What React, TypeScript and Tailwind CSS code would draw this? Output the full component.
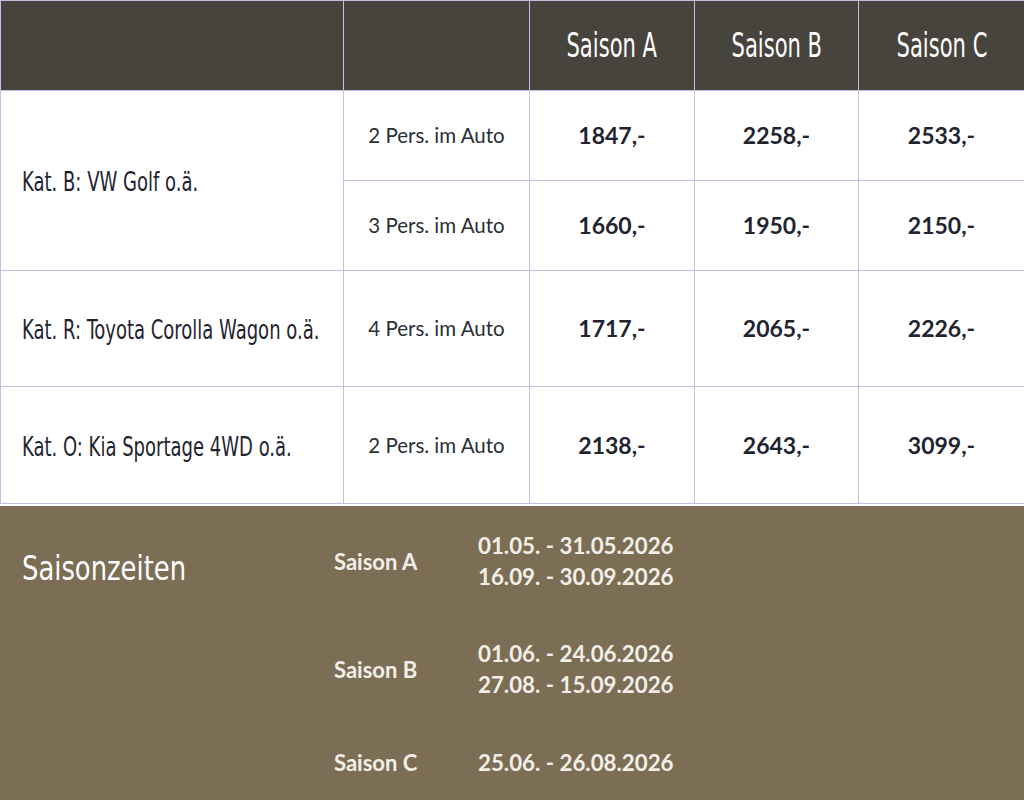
const cond = "font-['DejaVu_Sans_Condensed','DejaVu_Sans',sans-serif]";
const lato = "font-['Lato','Open_Sans',sans-serif]";

const rows = [
  { car: "Kat. B: VW Golf o.ä.", pers: "2 Pers. im Auto", prices: ["1847,-", "2258,-", "2533,-"], h: "h-[90px]", span: 2 },
  { car: "", pers: "3 Pers. im Auto", prices: ["1660,-", "1950,-", "2150,-"], h: "h-[90px]", span: 0 },
  { car: "Kat. R: Toyota Corolla Wagon o.ä.", pers: "4 Pers. im Auto", prices: ["1717,-", "2065,-", "2226,-"], h: "h-[116px]", span: 1 },
  { car: "Kat. O: Kia Sportage 4WD o.ä.", pers: "2 Pers. im Auto", prices: ["2138,-", "2643,-", "3099,-"], h: "h-[117px]", span: 1 },
];

const seasons = [
  { name: "Saison A", dates: ["01.05. - 31.05.2026", "16.09. - 30.09.2026"] },
  { name: "Saison B", dates: ["01.06. - 24.06.2026", "27.08. - 15.09.2026"] },
  { name: "Saison C", dates: ["25.06. - 26.08.2026"] },
];

export default function App() {
  return (
    <div className="w-[1024px] h-[800px] bg-white overflow-hidden">
      <table className="w-[1024px] border-collapse table-fixed">
        <colgroup>
          <col className="w-[343px]" />
          <col className="w-[186px]" />
          <col className="w-[165px]" />
          <col className="w-[164px]" />
          <col className="w-[166px]" />
        </colgroup>
        <thead>
          <tr className="h-[90px] bg-[#47433d]">
            <th className="border border-[#c6bde8]" />
            <th className="border border-[#c6bde8]" />
            {["Saison A", "Saison B", "Saison C"].map((s) => (
              <th
                key={s}
                className={`border border-[#c6bde8] text-white text-[33px] font-normal text-center whitespace-nowrap ${cond}`}
              >
                <span className="inline-block scale-x-[0.71]">{s}</span>
              </th>
            ))}
          </tr>
        </thead>
        <tbody>
          {rows.map((r, i) => (
            <tr key={i} className={r.h}>
              {r.span > 0 && (
                <td
                  rowSpan={r.span}
                  className={`border border-[#c6bde8] pl-[21px] pt-[4px] text-[26px] text-[#1f2530] whitespace-nowrap ${cond}`}
                >
                  <span className="inline-block origin-left scale-x-[0.77]">{r.car}</span>
                </td>
              )}
              <td className={`border border-[#c6bde8] text-center text-[20.5px] text-[#2a2f38] ${lato}`}>
                {r.pers}
              </td>
              {r.prices.map((p, j) => (
                <td
                  key={j}
                  className={`border border-[#c6bde8] text-center text-[23px] font-bold text-[#1f2530] ${lato}`}
                >
                  {p}
                </td>
              ))}
            </tr>
          ))}
        </tbody>
      </table>

      <div className="mt-[2px] h-[300px] bg-[#7b6e55] flex pt-[24px]">
        <div className={`w-[334px] pl-[22px] pt-[22px] text-[33px] text-white leading-none whitespace-nowrap ${cond}`}>
          <span className="inline-block origin-left scale-x-[0.87]">Saisonzeiten</span>
        </div>
        <div className="flex flex-col gap-[46px]">
          {seasons.map((s) => (
            <div key={s.name} className={`flex items-center font-bold ${lato}`}>
              <div className="w-[144px] text-[22px] text-[#f3efe8]">{s.name}</div>
              <div className="text-[22.3px] leading-[31px] text-[#f3efe8]">
                {s.dates.map((d) => (
                  <div key={d}>{d}</div>
                ))}
              </div>
            </div>
          ))}
        </div>
      </div>
    </div>
  );
}
